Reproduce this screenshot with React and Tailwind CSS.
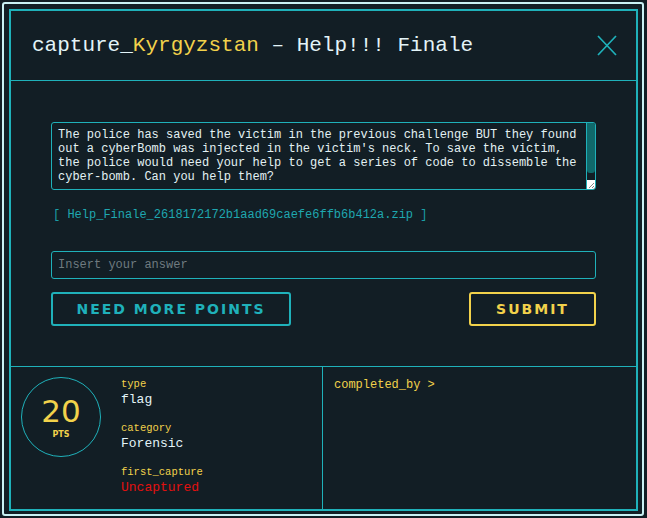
import React from "react";

const mono = { fontFamily: '"Liberation Mono", "Courier New", monospace' };

export default function App() {
  return (
    <div className="w-[647px] h-[518px] bg-[#121e25] p-[2px]" style={mono}>
      <div className="w-[642px] h-[514px] border-2 border-[#c9f1f4] rounded-[3px] pl-[5px] pt-[5px] pr-[4px] pb-[3px]">
        <div className="w-full h-full border-2 border-[#1fb1ba] flex flex-col">
          {/* header */}
          <div className="h-[70px] border-b border-[#1fb1ba] flex items-center justify-between pl-[21px] pr-[19px] shrink-0">
            <div className="text-[21px] leading-none text-[#e3f4f8]">
              capture_<span className="text-[#f2d24b]">Kyrgyzstan</span> – Help!!! Finale
            </div>
            <svg width="20" height="21" viewBox="0 0 20 21" className="text-[#1fb1ba]">
              <path d="M1 1 L19 20 M19 1 L1 20" stroke="currentColor" strokeWidth="1.7" fill="none" />
            </svg>
          </div>

          {/* body */}
          <div className="px-[40px] pt-[41px] pb-[40px] flex flex-col shrink-0">
            <div className="relative h-[68px] border border-[#1fb1ba] rounded-[3px] pl-[6px] pr-[14px] pt-[5px] text-[12px] leading-[14px] text-[#e3f1f3] overflow-hidden">
              The police has saved the victim in the previous challenge BUT they found out a cyberBomb was injected in the victim's neck. To save the victim, the police would need your help to get a series of code to dissemble the cyber-bomb. Can you help them?
              <div className="absolute right-0 top-0 bottom-0 w-[9px] border-l border-[#1fb1ba] flex flex-col">
                <div className="h-[50px] bg-[#10696b] rounded-b-[3px]"></div>
                <div className="flex-1"></div>
                <div className="h-[9px] bg-white flex items-end justify-end">
                  <svg width="7" height="7" viewBox="0 0 7 7">
                    <path d="M6 1 L1 6 M6 4 L4 6" stroke="#888" strokeWidth="1" fill="none" />
                  </svg>
                </div>
              </div>
            </div>

            <div className="mt-[17px] leading-[16px] text-[12px] pl-[2px] text-[#1a9da6]">
              [ <span className="text-[#1fa7b0]">Help_Finale_2618172172b1aad69caefe6ffb6b412a.zip</span> ]
            </div>

            <div className="mt-[28px] h-[28px] border border-[#1fb1ba] rounded-[3px] flex items-center pl-[6px] text-[12px] text-[#6f7b80]">
              Insert your answer
            </div>

            <div className="mt-[13px] flex justify-between">
              <div
                className="w-[240px] h-[34px] border-2 border-[#1fb1ba] rounded-[3px] flex items-center justify-center text-[#1fb1ba] text-[14px] font-bold tracking-[2px]"
                style={{ fontFamily: '"DejaVu Sans", sans-serif' }}
              >
                NEED MORE POINTS
              </div>
              <div
                className="w-[127px] h-[34px] border-2 border-[#f2d24b] rounded-[3px] flex items-center justify-center text-[#f2d24b] text-[14px] font-bold tracking-[2px]"
                style={{ fontFamily: '"DejaVu Sans", sans-serif' }}
              >
                SUBMIT
              </div>
            </div>
          </div>

          {/* bottom */}
          <div className="flex-1 border-t border-[#1fb1ba] flex">
            <div className="w-[312px] border-r border-[#1fb1ba] flex pl-[10px] pt-[10px]">
              <div className="w-[80px] h-[80px] rounded-full border border-[#1fb1ba] flex flex-col items-center justify-center text-[#f2d24b] shrink-0">
                <div className="text-[31px] leading-[30px] mt-[2px]" style={{ fontFamily: '"DejaVu Sans", sans-serif' }}>20</div>
                <div className="text-[8px] leading-[10px] mt-[4px] font-bold" style={{ fontFamily: '"DejaVu Sans", sans-serif' }}>PTS</div>
              </div>
              <div className="ml-[20px] -mt-[1px] flex flex-col gap-[12px]">
                <div>
                  <div className="text-[10.5px] leading-[16px] text-[#f2d24b]">type</div>
                  <div className="text-[13px] leading-[16px] text-[#e3f4f8]">flag</div>
                </div>
                <div>
                  <div className="text-[10.5px] leading-[16px] text-[#f2d24b]">category</div>
                  <div className="text-[13px] leading-[16px] text-[#e3f4f8]">Forensic</div>
                </div>
                <div>
                  <div className="text-[10.5px] leading-[16px] text-[#f2d24b]">first_capture</div>
                  <div className="text-[13px] leading-[16px] text-[#e3100f]">Uncaptured</div>
                </div>
              </div>
            </div>
            <div className="flex-1 pl-[11px] pt-[10px]">
              <div className="text-[12px] leading-[16px] text-[#f2d24b]">completed_by &gt;</div>
            </div>
          </div>
        </div>
      </div>
    </div>
  );
}
